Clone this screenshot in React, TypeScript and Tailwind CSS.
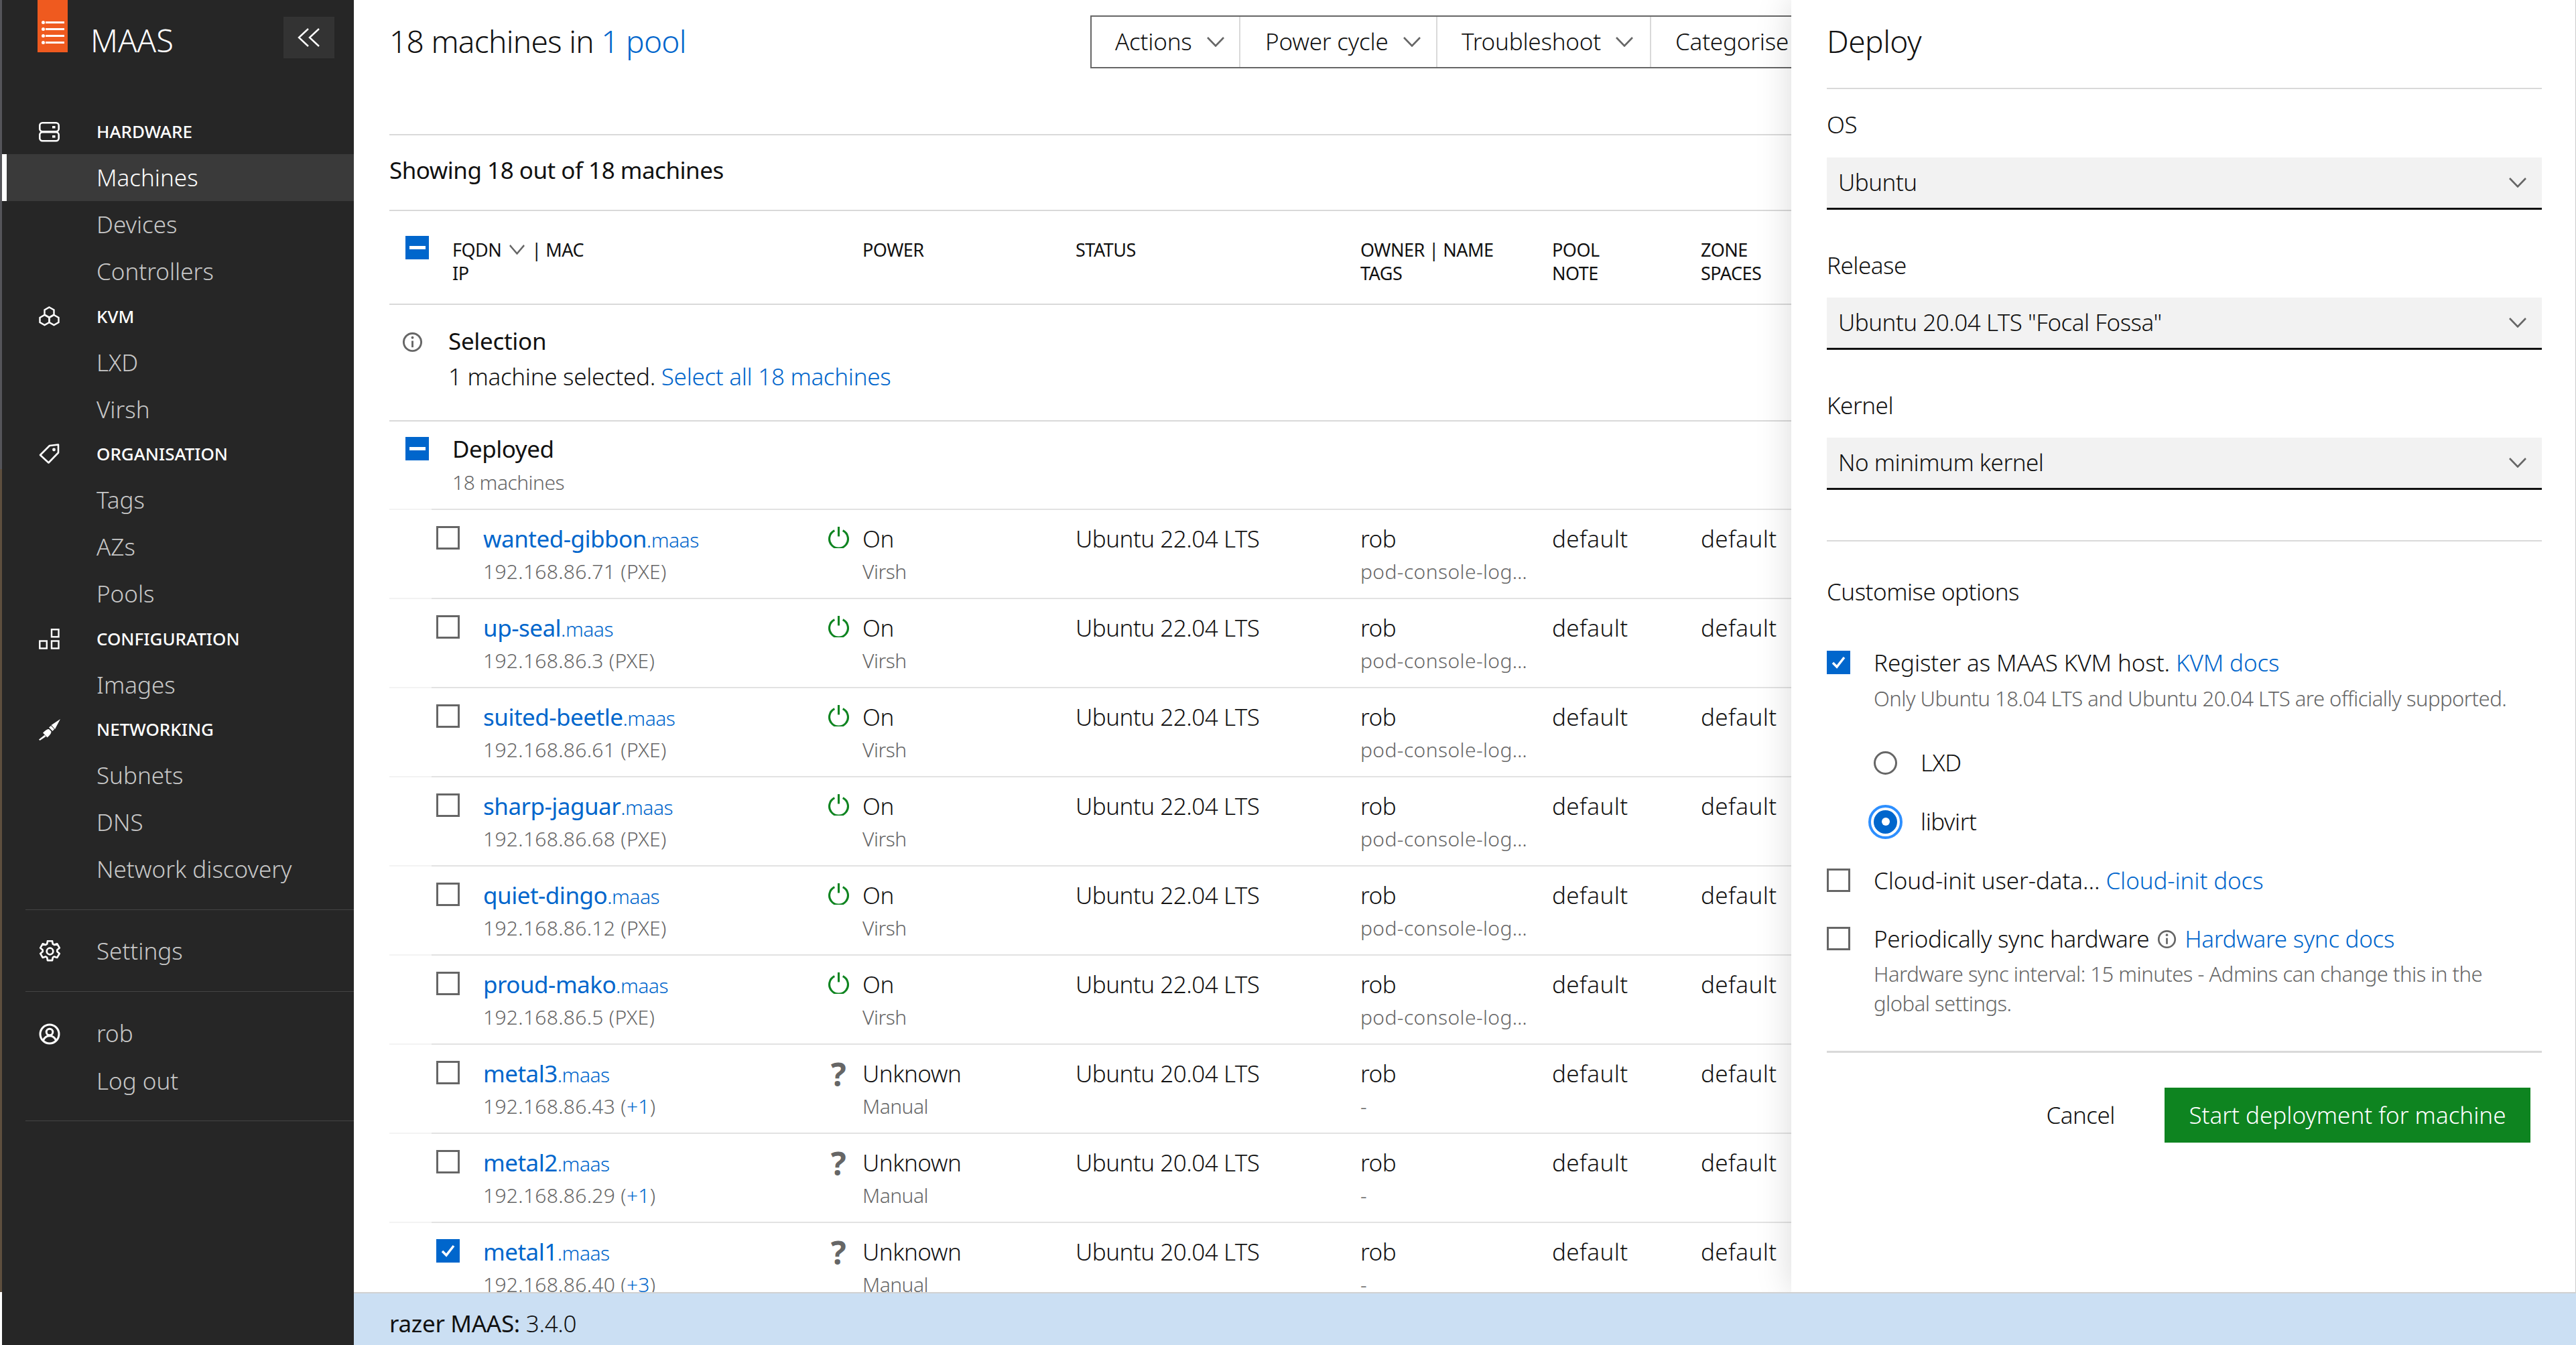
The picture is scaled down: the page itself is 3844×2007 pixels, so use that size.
import type { ReactNode } from "react";

const machines = [
  { host: "wanted-gibbon", ip: "192.168.86.71 (PXE)", power: "On", via: "Virsh", os: "Ubuntu 22.04 LTS", tags: "pod-console-log…" },
  { host: "up-seal", ip: "192.168.86.3 (PXE)", power: "On", via: "Virsh", os: "Ubuntu 22.04 LTS", tags: "pod-console-log…" },
  { host: "suited-beetle", ip: "192.168.86.61 (PXE)", power: "On", via: "Virsh", os: "Ubuntu 22.04 LTS", tags: "pod-console-log…" },
  { host: "sharp-jaguar", ip: "192.168.86.68 (PXE)", power: "On", via: "Virsh", os: "Ubuntu 22.04 LTS", tags: "pod-console-log…" },
  { host: "quiet-dingo", ip: "192.168.86.12 (PXE)", power: "On", via: "Virsh", os: "Ubuntu 22.04 LTS", tags: "pod-console-log…" },
  { host: "proud-mako", ip: "192.168.86.5 (PXE)", power: "On", via: "Virsh", os: "Ubuntu 22.04 LTS", tags: "pod-console-log…" },
  { host: "metal3", ip: "192.168.86.43", extra: "+1", power: "Unknown", via: "Manual", os: "Ubuntu 20.04 LTS", tags: "-" },
  { host: "metal2", ip: "192.168.86.29", extra: "+1", power: "Unknown", via: "Manual", os: "Ubuntu 20.04 LTS", tags: "-" },
  { host: "metal1", ip: "192.168.86.40", extra: "+3", power: "Unknown", via: "Manual", os: "Ubuntu 20.04 LTS", tags: "-", checked: true },
];

const gridCols = "grid grid-cols-[654px_370px_425px_286px_222px_1fr]";

const Chevron = ({ w = 26 }: { w?: number }) => (
  <svg width={w} height="15" viewBox="0 0 26 15" preserveAspectRatio="none" fill="none" stroke="#666" strokeWidth="2.6" className="shrink-0">
    <path d="M1 1l12 12.5L25 1" />
  </svg>
);

const Check = ({ checked, minus }: { checked?: boolean; minus?: boolean }) => {
  if (minus) {
    return (
      <div className="flex h-[35px] w-[35px] shrink-0 items-center justify-center bg-[#0066cc]">
        <div className="h-[5px] w-[24px] bg-white" />
      </div>
    );
  }
  if (checked) {
    return (
      <div className="flex h-[35px] w-[35px] shrink-0 items-center justify-center bg-[#0066cc]">
        <svg width="23" height="21" viewBox="0 0 23 21" fill="none" stroke="#fff" strokeWidth="3.5">
          <path d="M3 11l6 6L20 3" />
        </svg>
      </div>
    );
  }
  return <div className="h-[35px] w-[35px] shrink-0 border-[3px] border-[#666]" />;
};

const PowerIcon = () => (
  <svg width="33" height="33" viewBox="0 0 32 32" fill="none" stroke="#0e8420" strokeWidth="3" className="shrink-0">
    <path d="M10 6.5a13.5 13.5 0 1 0 12 0" />
    <path d="M16 1v14" />
  </svg>
);

const InfoIcon = ({ size }: { size: number }) => (
  <svg width={size} height={size} viewBox="0 0 32 32" fill="none" stroke="#666" strokeWidth="3" className="shrink-0">
    <circle cx="16" cy="16" r="13.5" />
    <path d="M16 14v10" />
    <circle cx="16" cy="9" r="2" fill="#666" stroke="none" />
  </svg>
);

const Logo = () => (
  <div className="flex h-[78px] w-[45px] shrink-0 flex-col items-center justify-end gap-[5px] bg-[#ef5a1f] pb-[12px]">
    {[0, 1, 2, 3].map((i) => (
      <div key={i} className="flex items-center gap-[1px]">
        <div className="h-[5px] w-[5px] rounded-full bg-white" />
        <div className="h-[3.5px] w-[28px] bg-white" />
      </div>
    ))}
  </div>
);

const ServerIcon = () => (
  <svg width="31" height="30" viewBox="0 0 31 30" fill="none" stroke="#fff" strokeWidth="2.6">
    <rect x="1.3" y="1.3" width="28.4" height="13" rx="4" />
    <rect x="1.3" y="15.3" width="28.4" height="13" rx="4" />
    <rect x="20" y="6" width="4.5" height="3.5" fill="#fff" stroke="none" />
    <rect x="20" y="20" width="4.5" height="3.5" fill="#fff" stroke="none" />
  </svg>
);

const HexIcon = () => (
  <svg width="31" height="30" viewBox="0 0 31 30" fill="none" stroke="#fff" strokeWidth="2.4">
    <path d="M15.5 1.5l7 4v7l-7 4-7-4v-7z" />
    <path d="M8.5 13l7 4v7l-7 4-7-4v-7z" />
    <path d="M22.5 13l7 4v7l-7 4-7-4v-7z" />
  </svg>
);

const TagIcon = () => (
  <svg width="31" height="31" viewBox="0 0 31 31" fill="none" stroke="#fff" strokeWidth="2.6">
    <path d="M2 17L16 3l13-1.5v12L14.5 28.5z" strokeLinejoin="round" />
    <circle cx="22.5" cy="9" r="2.4" fill="#fff" stroke="none" />
  </svg>
);

const ConfigIcon = () => (
  <svg width="31" height="31" viewBox="0 0 31 31" fill="none" stroke="#fff" strokeWidth="2.4">
    <rect x="19" y="1.3" width="10.5" height="11" />
    <rect x="19" y="18.5" width="10.5" height="11" />
    <rect x="1.3" y="18.5" width="10.5" height="11" />
  </svg>
);

const PlugIcon = () => (
  <svg width="32" height="32" viewBox="0 0 32 32" fill="#fff">
    <path d="M0 30.5l8.5-6.8 2 2.3L1.5 32z" />
    <path d="M6 20.5c3.5-3.5 6-5.5 9-5.5l3.5 3.5c0 3-2 5.5-6 9z" />
    <path d="M15 12.5l3-2.5 5 5-2.5 3z" />
    <path d="M18.5 9L32 0 24 15z" />
  </svg>
);

const GearIcon = () => (
  <svg width="33" height="33" viewBox="1 1 22 22" fill="none" stroke="#fff" strokeWidth="1.8" strokeLinejoin="round">
    <path d="M9.7 1.8h4.6l.6 3 1.4.8 2.9-1 2.3 4-2.3 2v1.7l2.3 2-2.3 4-2.9-1-1.4.8-.6 3H9.7l-.6-3-1.4-.8-2.9 1-2.3-4 2.3-2v-1.7l-2.3-2 2.3-4 2.9 1 1.4-.8z" />
    <circle cx="12" cy="12" r="3.2" />
  </svg>
);

const UserIcon = () => (
  <svg width="32" height="32" viewBox="0 0 32 32" fill="none" stroke="#fff" strokeWidth="3">
    <circle cx="16" cy="16" r="14" />
    <circle cx="16" cy="13" r="4.8" />
    <path d="M6.5 25.5c2-5 5.5-6.800 9.500-6.800s7.500 1.800 9.500 6.800" />
  </svg>
);

const NavHead = ({ icon, label }: { icon: ReactNode; label: string }) => (
  <div className="flex h-[65.5px] items-center pl-[55px] text-[26px] font-medium tracking-[0px] text-white">
    <div className="flex w-[86px] shrink-0">{icon}</div>
    {label}
  </div>
);

const NavItem = ({ label, active }: { label: string; active?: boolean }) =>
  active ? (
    <div className="flex h-[70px] items-center border-l-[7px] border-white bg-[#3a3a3a] pl-[134px] pt-[2px] text-white">{label}</div>
  ) : (
    <div className="flex h-[70px] items-center pl-[141px] pt-[2px]">{label}</div>
  );

const Field = ({ label, value, first }: { label: string; value: string; first?: boolean }) => (
  <div>
    <div className={first ? "mb-[24px] mt-[28px] leading-[50px]" : "mb-[23px] mt-[58px] leading-[50px]"}>{label}</div>
    <div className="flex h-[78px] items-center justify-between border-b-[3px] border-[#111] bg-[#f2f2f2] pl-[17px] pr-[23px]">
      <span>{value}</span>
      <Chevron />
    </div>
  </div>
);

export default function App() {
  return (
    <div className="flex h-[2007px] w-[3844px] overflow-hidden bg-white font-['Noto_Sans',sans-serif] text-[35px] font-light tracking-[-0.5px] text-[#111]">
      <div className="flex w-[3px] shrink-0 flex-col">
        <div className="h-[700px] bg-[#55555a]" />
        <div className="h-[1228px] bg-[#5e4f3e]" />
        <div className="flex-1 bg-white" />
      </div>

      {/* Sidebar */}
      <aside className="w-[525px] shrink-0 bg-[#262626] tracking-[0px] text-[#c8c8c8]">
        <div className="flex h-[164px] items-start pl-[53px] text-white">
          <Logo />
          <span className="ml-[34px] mt-[30px] text-[47px] font-light leading-[60px]">MAAS</span>
          <div className="ml-[164px] mt-[25px] flex h-[62px] w-[76px] items-center justify-center bg-[#333]">
            <svg width="36" height="30" viewBox="0 0 36 30" fill="none" stroke="#fff" strokeWidth="2.4">
              <path d="M17 2L3 15l14 13" />
              <path d="M33 2L19 15l14 13" />
            </svg>
          </div>
        </div>
        <NavHead icon={<ServerIcon />} label="HARDWARE" />
        <NavItem label="Machines" active />
        <NavItem label="Devices" />
        <NavItem label="Controllers" />
        <NavHead icon={<HexIcon />} label="KVM" />
        <NavItem label="LXD" />
        <NavItem label="Virsh" />
        <NavHead icon={<TagIcon />} label="ORGANISATION" />
        <NavItem label="Tags" />
        <NavItem label="AZs" />
        <NavItem label="Pools" />
        <NavHead icon={<ConfigIcon />} label="CONFIGURATION" />
        <NavItem label="Images" />
        <NavHead icon={<PlugIcon />} label="NETWORKING" />
        <NavItem label="Subnets" />
        <NavItem label="DNS" />
        <NavItem label="Network discovery" />
        <div className="ml-[35px] mt-[25px] h-[1px] bg-[#444]" />
        <div className="flex h-[121px] items-center pl-[55px] pt-[2px]">
          <div className="flex w-[86px] shrink-0">
            <GearIcon />
          </div>
          Settings
        </div>
        <div className="ml-[35px] h-[1px] bg-[#444]" />
        <div className="flex h-[70px] items-center pl-[55px] pt-[56px]">
          <div className="flex w-[86px] shrink-0">
            <UserIcon />
          </div>
          rob
        </div>
        <div className="mt-[27px] flex h-[70px] items-center pl-[141px] pt-[4px]">Log out</div>
        <div className="ml-[35px] mt-[25px] h-[1px] bg-[#444]" />
      </aside>

      <div className="flex min-w-0 flex-1 flex-col">
        <div className="relative min-h-0 flex-1 overflow-hidden">
          {/* Machine list */}
          <main className="w-[3400px] pl-[53px]">
            <div className="flex h-[202px] border-b-2 border-[#d9d9d9]">
              <h1 className="w-[1046px] pt-[31px] text-[46px] font-light leading-[60px] tracking-[-0.7px]">
                18 machines in <span className="text-[#0066cc]">1 pool</span>
              </h1>
              <div className="mt-[23px] flex h-[79px] border-2 border-r-0 border-[#666] tracking-[-0.2px]">
                <div className="flex w-[222px] items-center border-r-2 border-[#d9d9d9] pl-[35px]">
                  Actions
                  <span className="ml-[22px]">
                    <Chevron />
                  </span>
                </div>
                <div className="flex w-[294px] items-center border-r-2 border-[#d9d9d9] pl-[37px]">
                  Power cycle
                  <span className="ml-[22px]">
                    <Chevron />
                  </span>
                </div>
                <div className="flex w-[319px] items-center border-r-2 border-[#d9d9d9] pl-[36px]">
                  Troubleshoot
                  <span className="ml-[22px]">
                    <Chevron />
                  </span>
                </div>
                <div className="flex w-[300px] items-center pl-[36px]">Categorise</div>
              </div>
            </div>
            <div className="flex h-[113px] items-center border-b-2 border-[#d9d9d9] pb-[7px] font-normal">Showing 18 out of 18 machines</div>

            {/* Table head */}
            <div className={`${gridCols} h-[140px] border-b-2 border-[#d9d9d9] pt-[40px] text-[27px] font-normal leading-[35px]`}>
              <div className="flex pl-[24px]">
                <div className="-mt-[3px]">
                  <Check minus />
                </div>
                <div className="ml-[35px]">
                  <div className="flex items-center">
                    FQDN
                    <span className="ml-[12px] mr-[10px]">
                      <Chevron w={23} />
                    </span>
                    | MAC
                  </div>
                  <div>IP</div>
                </div>
              </div>
              <div className="pl-[52px]">POWER</div>
              <div>STATUS</div>
              <div>
                <div>OWNER | NAME</div>
                <div>TAGS</div>
              </div>
              <div>
                <div>POOL</div>
                <div>NOTE</div>
              </div>
              <div>
                <div>ZONE</div>
                <div>SPACES</div>
              </div>
            </div>

            {/* Selection */}
            <div className="flex h-[174px] border-b-2 border-[#d9d9d9] pt-[27px] leading-[53px]">
              <div className="ml-[19px] mt-[13px] w-[69px]">
                <InfoIcon size={31} />
              </div>
              <div className="tracking-[-0.3px]">
                <div className="font-normal">Selection</div>
                <div>
                  1 machine selected. <span className="text-[#0066cc]">Select all 18 machines</span>
                </div>
              </div>
            </div>

            {/* Group */}
            <div className="flex h-[130px] pl-[24px] pt-[16px] leading-[50px]">
              <div className="mt-[7px]">
                <Check minus />
              </div>
              <div className="ml-[35px]">
                <div className="font-normal">Deployed</div>
                <div className="text-[30px] text-[#666]">18 machines</div>
              </div>
            </div>
            <div className="flex">
              <div className="h-[2px] w-[63px] bg-[#f3f3f3]" />
              <div className="h-[2px] flex-1 bg-[#e2e2e2]" />
            </div>

            {machines.map((m) => (
              <div key={m.host} className="h-[133px]">
                <div className={`${gridCols} h-[131px] pt-[18px] leading-[49px]`}>
                  <div className="flex pl-[70px]">
                    <div className="mt-[6px]">
                      <Check checked={m.checked} />
                    </div>
                    <div className="ml-[35px]">
                      <div className="font-normal text-[#0066cc]">
                        {m.host}
                        <span className="text-[30px] font-light">.maas</span>
                      </div>
                      <div className="-mt-[2px] text-[30px] tracking-[0.3px] text-[#666]">
                        {m.ip}
                        {m.extra && (
                          <>
                            {" ("}
                            <span className="text-[#0066cc]">{m.extra}</span>)
                          </>
                        )}
                      </div>
                    </div>
                  </div>
                  <div className="flex">
                    {m.power === "On" ? (
                      <div className="mr-[19px] mt-[6px]">
                        <PowerIcon />
                      </div>
                    ) : (
                      <div className="mr-[20px] mt-[2px] w-[32px] text-center text-[48px] font-bold leading-[48px] text-[#666]">?</div>
                    )}
                    <div>
                      <div>{m.power}</div>
                      <div className="text-[30px] text-[#666]">{m.via}</div>
                    </div>
                  </div>
                  <div>{m.os}</div>
                  <div>
                    <div>rob</div>
                    <div className="text-[30px] tracking-[0.4px] text-[#666]">{m.tags}</div>
                  </div>
                  <div className="tracking-[0.4px]">default</div>
                  <div className="tracking-[0.4px]">default</div>
                </div>
                <div className="flex">
                  <div className="h-[2px] w-[63px] bg-[#f3f3f3]" />
                  <div className="h-[2px] flex-1 bg-[#e2e2e2]" />
                </div>
              </div>
            ))}
          </main>

          {/* Deploy panel */}
          <section className="absolute bottom-0 right-0 top-0 w-[1171px] border-r border-[#ccc] bg-white pl-[53px] pr-[50px] shadow-[0_0_50px_rgba(0,0,0,0.15)]">
            <h2 className="h-[133px] border-b-2 border-[#d9d9d9] text-[46px] font-light leading-[122px]">Deploy</h2>
            <Field label="OS" value="Ubuntu" first />
            <Field label="Release" value={'Ubuntu 20.04 LTS "Focal Fossa"'} />
            <Field label="Kernel" value="No minimum kernel" />
            <div className="mt-[75px] h-[2px] bg-[#d9d9d9]" />
            <div className="mt-[50px] leading-[50px]">Customise options</div>

            <div className="mt-[56px] flex leading-[50px] tracking-[-0.1px]">
              <div className="mr-[35px] mt-[7px]">
                <Check checked />
              </div>
              <div>
                Register as MAAS KVM host. <span className="text-[#0066cc]">KVM docs</span>
              </div>
            </div>
            <div className="ml-[70px] mt-[6px] text-[31px] leading-[44px] text-[#666]">
              Only Ubuntu 18.04 LTS and Ubuntu 20.04 LTS are officially supported.
            </div>

            <div className="ml-[70px] mt-[49px] flex items-center leading-[50px]">
              <div className="mr-[35px] h-[35px] w-[35px] rounded-full border-[3px] border-[#666]" />
              LXD
            </div>
            <div className="ml-[70px] mt-[38px] flex items-center leading-[50px]">
              <div className="mr-[35px] flex h-[35px] w-[35px] items-center justify-center rounded-full bg-[#0066cc] outline-[4px] outline-offset-[4px] outline-[#2d8fff] ring-[4px] ring-white">
                <div className="h-[12px] w-[12px] rounded-full bg-white" />
              </div>
              libvirt
            </div>

            <div className="mt-[38px] flex leading-[50px] tracking-[-0.1px]">
              <div className="mr-[35px] mt-[7px]">
                <Check />
              </div>
              <div>
                Cloud-init user-data… <span className="text-[#0066cc]">Cloud-init docs</span>
              </div>
            </div>
            <div className="mt-[37px] flex leading-[50px] tracking-[-0.3px]">
              <div className="mr-[35px] mt-[7px]">
                <Check />
              </div>
              <div className="flex items-center">
                Periodically sync hardware
                <span className="ml-[12px] mr-[12px]">
                  <InfoIcon size={29} />
                </span>
                <span className="text-[#0066cc]">Hardware sync docs</span>
              </div>
            </div>
            <div className="ml-[70px] mt-[5px] text-[31px] leading-[44px] text-[#666]">
              Hardware sync interval: 15 minutes - Admins can change this in the global settings.
            </div>

            <div className="mt-[49px] h-[3px] bg-[#d9d9d9]" />
            <div className="mt-[52px] flex items-center justify-end pr-[17px]">
              <span className="mr-[74px]">Cancel</span>
              <div className="flex h-[82px] w-[546px] items-center justify-center bg-[#0e8420] tracking-[0px] text-white">Start deployment for machine</div>
            </div>
          </section>
        </div>

        <footer className="relative flex h-[79px] shrink-0 items-center border-t-2 border-[#d2d2d2] bg-[#cbdff3] pl-[53px] pt-[14px] tracking-[-0.3px]">
          <span className="font-normal">razer MAAS:</span>&nbsp;3.4.0
        </footer>
      </div>
    </div>
  );
}
